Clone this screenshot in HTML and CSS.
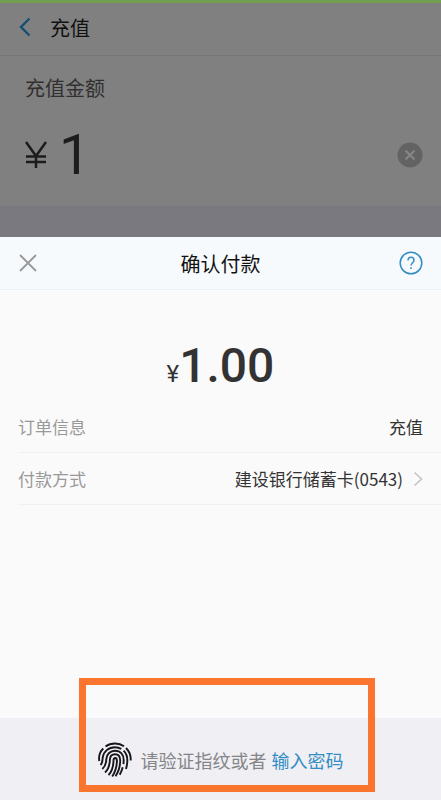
FILE: index.html
```html
<!DOCTYPE html>
<html lang="zh-CN">
<head>
<meta charset="utf-8">
<meta name="viewport" content="width=device-width, initial-scale=1">
<title>确认付款</title>
<link rel="stylesheet" href="styles.css">
</head>
<body>
<div class="page">
  <header class="topbar">
    <button class="icon-button" type="button" aria-label="返回">
      <svg width="14" height="20" viewBox="0 0 14 20" fill="none" stroke="#154f72" stroke-width="2.4"><path d="M11.5 1.5 3 10l8.500 8.500"/></svg>
    </button>
    <h1 class="topbar-title">充值</h1>
  </header>
  <section class="recharge">
    <label class="recharge-label" for="amount">充值金额</label>
    <div class="recharge-field">
      <svg class="recharge-yen" width="22" height="28" viewBox="0 0 22 28" fill="none" stroke="#1c1c1c" stroke-width="2.500"><path d="M1 1l10 14L21 1M11 14v13M1 15.500h20M1 21h20"/></svg>
      <input class="recharge-input" id="amount" type="text" inputmode="decimal" value="1">
      <button class="icon-button" type="button" aria-label="清除">
        <svg width="26" height="26" viewBox="0 0 26 26"><circle cx="13" cy="13" r="12.500" fill="#636363"/><path d="M8.500 8.500l9 9M17.500 8.500l-9 9" stroke="#858585" stroke-width="2.200"/></svg>
      </button>
    </div>
  </section>
  <main class="sheet">
    <header class="sheet-header">
      <button class="icon-button" type="button" aria-label="关闭">
        <svg width="20" height="20" viewBox="0 0 20 20" stroke="#999" stroke-width="1.800"><path d="M2 2l16 16M18 2L2 18"/></svg>
      </button>
      <h2 class="sheet-title">确认付款</h2>
      <button class="icon-button help" type="button" aria-label="帮助">
        <svg width="24" height="24" viewBox="0 0 24 24" fill="none" stroke="#348dc4" stroke-width="1.500"><circle cx="12" cy="12" r="10.800"/><path d="M9 9.500C9 7.500 10.200 6.300 12 6.300s3 1.200 3 3c0 2.300-3 2.600-3 5.300"/><path d="M12 16.200v1.700"/></svg>
      </button>
    </header>
    <p class="total"><span class="total-sign">¥</span>1.00</p>
    <dl class="details">
      <div class="row"><dt>订单信息</dt><dd>充值</dd></div>
      <div class="row"><dt>付款方式</dt><dd>建设银行储蓄卡(0543)
        <svg class="row-arrow" width="10" height="16" viewBox="0 0 10 16" fill="none" stroke="#c4c4c4" stroke-width="1.600"><path d="M1.500 1.500 8.500 8l-7 6.500"/></svg></dd></div>
    </dl>
    <footer class="verify">
      <svg class="fingerprint" width="34" height="36" viewBox="0 0 34 36" fill="none" stroke="#17171b" stroke-width="1.900">
        <path d="M7.500 4.500C13 .500 21 .500 26 4.200"/>
        <path d="M1.300 19C.500 14 2 9.500 5.300 6.500"/>
        <path d="M28 6c3.500 3.500 5 7.500 4.700 12.500"/>
        <path d="M2.500 23C5 20.500 4.300 18 4.700 15.500 5.600 9.500 10.500 5.200 17 5.200c2.300 0 4.500.600 6.300 1.700"/>
        <path d="M25.600 8.700c3 3 3.900 6.700 3.700 10.500-.100 2.800-.500 5.300-1.300 7.800"/>
        <path d="M4.300 27c4-3.300 3.800-6.500 4-10C8.700 12 12.300 8.700 17 8.700c5.500 0 8.700 4 8.700 9.500 0 1.300-.100 2.600-.300 4"/>
        <path d="M24.700 25.300c-.700 2.800-1.700 5.200-3 7.400"/>
        <path d="M7 30.500c4.300-3.800 4.700-8 4.900-13 .200-3.300 2.200-5.300 5.100-5.300 3.500 0 5.200 2.600 5.200 6.300 0 5.500-1.600 11-4.600 15.700"/>
        <path d="M10.500 33.200c3.500-3.800 4.900-8.700 5-14.700"/>
        <path d="M18.900 18c.100 6-1.400 11.500-4.700 16.500"/>
        <path d="M15.500 18.700c0-1.800.600-2.700 1.700-2.700s1.700.900 1.700 2.500"/>
      </svg>
      <span>请验证指纹或者</span>
      <a class="verify-link" href="#password">输入密码</a>
      <div class="highlight"></div>
    </footer>
  </main>
</div>
</body>
</html>
```
FILE: styles.css
```css
* { box-sizing: border-box; }

body {
  margin: 0;
  font-family: "Noto Sans CJK SC", sans-serif;
  color: #333;
}

h1, h2, p, dl, dd { margin: 0; }

.page {
  display: flex;
  flex-direction: column;
  min-height: 100vh;
  background: #7a797f;
  border-top: 3px solid #71a052;
}

.icon-button {
  display: flex;
  padding: 0;
  border: 0;
  background: none;
}

.topbar {
  display: flex;
  align-items: center;
  gap: 18px;
  height: 53px;
  padding: 0 18px 4px;
  background: #808080;
  border-bottom: 1px solid #777;
}

.topbar-title {
  font-size: 20px;
  font-weight: 400;
  color: #111;
}

.recharge {
  height: 150px;
  padding: 16px 18px 0 25px;
  background: #808080;
}

.recharge-label {
  display: block;
  font-size: 20px;
  line-height: 32px;
  color: #303030;
}

.recharge-field {
  display: flex;
  align-items: center;
  gap: 12px;
  height: 102px;
}

.recharge-input {
  flex: 1;
  min-width: 0;
  height: 64px;
  padding: 0;
  border: 0;
  background: none;
  font: 400 56px/64px Roboto, sans-serif;
  color: #1c1c1c;
}

.sheet {
  display: flex;
  flex: 1;
  flex-direction: column;
  margin-top: 31px;
  background: #fafafa;
}

.sheet-header {
  display: grid;
  grid-template-columns: 24px 1fr 24px;
  align-items: center;
  height: 53px;
  padding: 0 18px;
  background: #f7fafc;
  border-bottom: 1px solid #eef1f3;
}

.sheet-title {
  font-size: 20px;
  font-weight: 400;
  text-align: center;
  color: #111;
}

.total {
  padding: 44px 0 3px;
  font-family: Roboto, sans-serif;
  font-size: 48px;
  font-weight: 500;
  line-height: 64px;
  text-align: center;
}

.total-sign {
  font-size: 24px;
  font-weight: 400;
  line-height: 1;
}

.row {
  display: flex;
  align-items: center;
  justify-content: space-between;
  height: 52px;
  margin-left: 18px;
  padding-right: 18px;
  border-bottom: 1px solid #f0f0f0;
  font-size: 17px;
}

.row dt { color: #999; }

.row dd {
  display: flex;
  align-items: center;
}

.row-arrow { margin-left: 10px; }

.verify {
  position: relative;
  display: flex;
  align-items: center;
  justify-content: center;
  height: 82px;
  margin-top: auto;
  padding-top: 2px;
  background: #efeff4;
  font-size: 18px;
  color: #858588;
}

.fingerprint { margin-right: 9px; }

.verify-link {
  margin-left: 5px;
  color: #348dc4;
  text-decoration: none;
}

.highlight {
  position: absolute;
  top: -40px;
  right: 15%;
  bottom: 8px;
  left: 18%;
  border: 7px solid #fa762e;
  pointer-events: none;
}
```
